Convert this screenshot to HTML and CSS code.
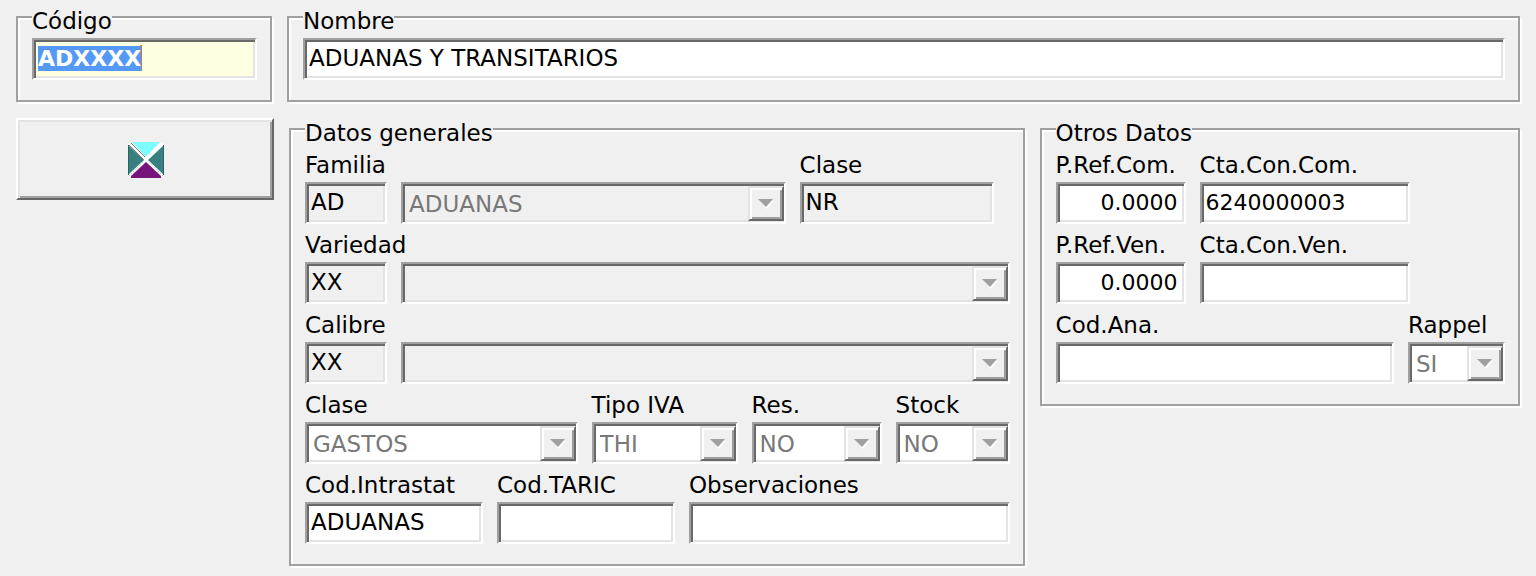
FILE: index.html
```
<!DOCTYPE html>
<html lang="es">
<head>
  <meta charset="UTF-8" />
  <meta name="viewport" content="width=device-width, initial-scale=1.0"/>
  <title>Artículos</title>
  <link rel="stylesheet" href="styles.css">
</head>
<body>
  <form class="ficha">
    <div class="top">
      <fieldset class="group single">
        <legend><label for="codigo">Código</label></legend>
        <input type="text" id="codigo" class="key" value="ADXXXX">
      </fieldset>
      <fieldset class="group single">
        <legend><label for="nombre">Nombre</label></legend>
        <input type="text" id="nombre" value="ADUANAS Y TRANSITARIOS">
      </fieldset>
    </div>

    <div class="main">
      <button type="button" class="tool" aria-label="Salir">
        <svg width="38" height="38" viewBox="0 0 38 38" aria-hidden="true">
          <path fill="#fff" d="M3 1h32l2 2v32l-2 2H3l-2-2V3z"/>
          <path fill="#7ffcfc" d="M5 1h28L19 16z"/>
          <path fill="#3a7f7f" d="M1 4l16 15L1 34zM37 4L21 19l16 15z"/>
          <path fill="#76147c" d="M19 21l15 14v2H4v-2z"/>
          <path fill="none" stroke="#808080" d="M2 4l15 15M4 2l14 14"/>
          <path fill="none" stroke="#b0b0b0" stroke-dasharray="1 2" d="M2 35l15-15M36 35L21 20"/>
          <path fill="none" stroke="#2c6464" d="M1.500 4v30M36.500 4v30"/>
        </svg>
      </button>

      <fieldset class="group">
        <legend>Datos generales</legend>
        <div class="row inset">
          <div class="field w-code">
            <label for="familia">Familia</label>
            <input type="text" id="familia" class="locked" value="AD" readonly>
          </div>
          <div class="field grow">
            <div class="combo">
              <select class="locked" aria-label="Nombre de la familia" disabled><option>ADUANAS</option></select>
            </div>
          </div>
          <div class="field w-class">
            <label for="claseFamilia">Clase</label>
            <input type="text" id="claseFamilia" class="locked" value="NR" readonly>
          </div>
        </div>
        <div class="row">
          <div class="field w-code">
            <label for="variedad">Variedad</label>
            <input type="text" id="variedad" class="locked" value="XX" readonly>
          </div>
          <div class="field grow">
            <div class="combo">
              <select class="locked" aria-label="Nombre de la variedad" disabled><option></option></select>
            </div>
          </div>
        </div>
        <div class="row">
          <div class="field w-code">
            <label for="calibre">Calibre</label>
            <input type="text" id="calibre" class="locked" value="XX" readonly>
          </div>
          <div class="field grow">
            <div class="combo">
              <select class="locked" aria-label="Nombre del calibre" disabled><option></option></select>
            </div>
          </div>
        </div>
        <div class="row">
          <div class="field grow">
            <label for="clase">Clase</label>
            <div class="combo">
              <select id="clase" disabled><option>GASTOS</option></select>
            </div>
          </div>
          <div class="field w-iva">
            <label for="tipoIva">Tipo IVA</label>
            <div class="combo">
              <select id="tipoIva" disabled><option>THI</option></select>
            </div>
          </div>
          <div class="field w-res">
            <label for="res">Res.</label>
            <div class="combo">
              <select id="res" disabled><option>NO</option></select>
            </div>
          </div>
          <div class="field w-stock">
            <label for="stock">Stock</label>
            <div class="combo">
              <select id="stock" disabled><option>NO</option></select>
            </div>
          </div>
        </div>
        <div class="row">
          <div class="field w-tariff">
            <label for="intrastat">Cod.Intrastat</label>
            <input type="text" id="intrastat" value="ADUANAS">
          </div>
          <div class="field w-tariff">
            <label for="taric">Cod.TARIC</label>
            <input type="text" id="taric">
          </div>
          <div class="field grow">
            <label for="observaciones">Observaciones</label>
            <input type="text" id="observaciones">
          </div>
        </div>
      </fieldset>

      <fieldset class="group">
        <legend>Otros Datos</legend>
        <div class="row">
          <div class="field w-res">
            <label for="refCom">P.Ref.Com.</label>
            <input type="text" id="refCom" class="figures amount" value="0.0000">
          </div>
          <div class="field w-account">
            <label for="ctaCom">Cta.Con.Com.</label>
            <input type="text" id="ctaCom" class="figures" value="6240000003">
          </div>
        </div>
        <div class="row">
          <div class="field w-res">
            <label for="refVen">P.Ref.Ven.</label>
            <input type="text" id="refVen" class="figures amount" value="0.0000">
          </div>
          <div class="field w-account">
            <label for="ctaVen">Cta.Con.Ven.</label>
            <input type="text" id="ctaVen" class="figures">
          </div>
        </div>
        <div class="row">
          <div class="field grow">
            <label for="codAna">Cod.Ana.</label>
            <input type="text" id="codAna">
          </div>
          <div class="field w-rappel">
            <label for="rappel">Rappel</label>
            <div class="combo">
              <select id="rappel" disabled><option>SI</option></select>
            </div>
          </div>
        </div>
      </fieldset>
    </div>
  </form>

  <script>
    // Start with the code selected, ready to be typed over
    const codigo = document.getElementById('codigo');
    codigo.focus();
    codigo.select();
  </script>
</body>
</html>
```
FILE: styles.css
```
* {
  box-sizing: border-box;
}

body {
  margin: 0;
  padding: 4px 16px 8px;
  background: #f0f0f0;
  color: #000;
  font-family: Verdana, "DejaVu Sans", sans-serif;
  font-size: 23px;
  line-height: 18px;
}

.ficha {
  display: flex;
  flex-direction: column;
  gap: 14px;
}

.top {
  display: grid;
  grid-template-columns: 256px 1fr;
  gap: 15px;
}

.main {
  display: grid;
  grid-template-columns: 258px 735fr 480fr;
  align-items: start;
  gap: 15px;
}

/* Etched frame */
.group {
  min-width: 0;
  margin: 0;
  padding: 2px 13px 20px 14px;
  border: 2px solid #a0a0a0;
  box-shadow: 2px 2px 0 #fff, inset 2px 2px 0 #fff;
}

.group.single {
  padding-top: 8px;
}

legend {
  padding: 8px 0 0;
  background: #f0f0f0;
  white-space: nowrap;
}

.row {
  display: flex;
  align-items: flex-end;
  gap: 14px;
}

.row.inset {
  padding-right: 16px;
}

.field {
  min-width: 0;
}

.field label {
  display: block;
  padding-top: 4px;
  line-height: 34px;
  white-space: nowrap;
}

.grow { flex: 1; }
.w-code { width: 82px; }
.w-class { width: 194px; }
.w-iva { width: 146px; }
.w-res { width: 130px; }
.w-stock { width: 114px; }
.w-tariff { width: 178px; }
.w-account { width: 210px; }
.w-rappel { width: 97px; }

/* Sunken boxes */
input, select {
  display: block;
  width: 100%;
  height: 42px;
  margin: 0;
  padding: 0 4px 2px;
  border: 2px solid;
  border-color: #a0a0a0 #fff #fff #a0a0a0;
  border-radius: 0;
  outline: none;
  background: #fff;
  box-shadow: inset 2px 2px 0 #696969, inset -2px -2px 0 #e3e3e3;
  color: #000;
  font: inherit;
}

.locked {
  background: #f0f0f0;
}

.figures {
  font-size: 22px;
}

.amount {
  padding-right: 6px;
  text-align: right;
}

.key {
  background: #ffffe1 linear-gradient(#c87840, #c87840) no-repeat 106px 5px / 2px 26px;
  font-size: 22px;
  font-weight: bold;
}

.key::selection {
  background: #5599f7;
  color: #fff;
}

.combo {
  position: relative;
}

select {
  padding: 2px 36px 0 6px;
  appearance: none;
}

select:disabled {
  color: #787878;
  opacity: 1;
}

/* Drop-down button at the end of the box */
.combo::after {
  content: "";
  position: absolute;
  top: 4px;
  right: 2px;
  width: 36px;
  height: 35px;
  box-sizing: border-box;
  border: 2px solid;
  border-color: #e3e3e3 #696969 #696969 #e3e3e3;
  box-shadow: inset 2px 2px 0 #fff, inset -2px -2px 0 #a0a0a0;
  background: #f0f0f0 url("data:image/svg+xml,%3Csvg xmlns='http://www.w3.org/2000/svg' width='16' height='10'%3E%3Cpath fill='%23fff' d='M2 2h14l-7 8z'/%3E%3Cpath fill='%23a0a0a0' d='M0 0h15L8 8z'/%3E%3C/svg%3E") no-repeat center;
  pointer-events: none;
}

/* Raised button */
.tool {
  display: flex;
  align-items: center;
  justify-content: center;
  height: 82px;
  margin: 2px 0 0;
  padding: 2px 0 0 2px;
  border: 2px solid;
  border-color: #fff #696969 #696969 #fff;
  border-radius: 0;
  background: #f0f0f0;
  box-shadow: inset 2px 2px 0 #e3e3e3, inset -2px -2px 0 #a0a0a0;
}
```
